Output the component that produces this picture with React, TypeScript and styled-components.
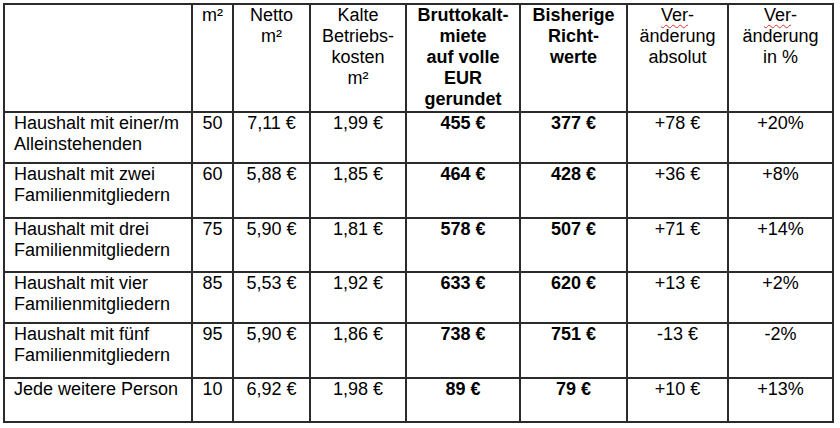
import React from 'react';
import styled, { createGlobalStyle } from 'styled-components';

const GlobalStyle = createGlobalStyle`
  html, body {
    margin: 0;
    padding: 0;
    background: #fff;
  }
  body {
    font-family: 'Liberation Sans', Arial, sans-serif;
    color: #000;
  }
`;

const Page = styled.div`
  width: 840px;
  height: 428px;
  padding: 3px 0 0 3px;
  box-sizing: border-box;
  background: #fff;
`;

const Table = styled.table`
  border-collapse: collapse;
  table-layout: fixed;
  width: 829px;
  font-size: 18px;
`;

const HeadRow = styled.tr`
  height: 108px;
`;

const Row = styled.tr<{ $h: number }>`
  height: ${(p) => p.$h}px;
`;

const HeadCell = styled.th<{ $bold?: boolean }>`
  border: 2px solid #2b2b2b;
  padding: 0 2px;
  vertical-align: top;
  text-align: center;
  font-weight: ${(p) => (p.$bold ? 700 : 400)};
  line-height: 21px;
`;

const Cell = styled.td<{ $bold?: boolean; $label?: boolean }>`
  border: 2px solid #2b2b2b;
  padding: ${(p) => (p.$label ? '0 4px 0 9px' : '0 2px')};
  vertical-align: top;
  text-align: ${(p) => (p.$label ? 'left' : 'center')};
  font-weight: ${(p) => (p.$bold ? 700 : 400)};
  line-height: 21px;
`;

const Squiggle = styled.span`
  text-decoration: underline wavy #d03030;
  text-decoration-thickness: 1px;
  text-underline-offset: 3px;
`;

const widths = [188, 41, 77, 96, 114, 107, 101, 105];

interface RowData {
  label: string;
  m2: string;
  netto: string;
  kalt: string;
  brutto: string;
  bisher: string;
  abs: string;
  pct: string;
  h: number;
}

const rows: RowData[] = [
  { label: 'Haushalt mit einer/m Alleinstehenden', m2: '50', netto: '7,11 €', kalt: '1,99 €', brutto: '455 €', bisher: '377 €', abs: '+78 €', pct: '+20%', h: 51 },
  { label: 'Haushalt mit zwei Familienmitgliedern', m2: '60', netto: '5,88 €', kalt: '1,85 €', brutto: '464 €', bisher: '428 €', abs: '+36 €', pct: '+8%', h: 55 },
  { label: 'Haushalt mit drei Familienmitgliedern', m2: '75', netto: '5,90 €', kalt: '1,81 €', brutto: '578 €', bisher: '507 €', abs: '+71 €', pct: '+14%', h: 54 },
  { label: 'Haushalt mit vier Familienmitgliedern', m2: '85', netto: '5,53 €', kalt: '1,92 €', brutto: '633 €', bisher: '620 €', abs: '+13 €', pct: '+2%', h: 51 },
  { label: 'Haushalt mit fünf Familienmitgliedern', m2: '95', netto: '5,90 €', kalt: '1,86 €', brutto: '738 €', bisher: '751 €', abs: '-13 €', pct: '-2%', h: 55 },
  { label: 'Jede weitere Person', m2: '10', netto: '6,92 €', kalt: '1,98 €', brutto: '89 €', bisher: '79 €', abs: '+10 €', pct: '+13%', h: 44 },
];

const App = () => {
  return (
    <Page>
      <GlobalStyle />
      <Table>
        <colgroup>
          {widths.map((w, i) => (
            <col key={i} style={{ width: w }} />
          ))}
        </colgroup>
        <thead>
          <HeadRow>
            <HeadCell />
            <HeadCell>m²</HeadCell>
            <HeadCell>
              Netto
              <br />
              m²
            </HeadCell>
            <HeadCell>
              Kalte
              <br />
              Betriebs-
              <br />
              kosten
              <br />
              m²
            </HeadCell>
            <HeadCell $bold>
              Bruttokalt-
              <br />
              miete
              <br />
              auf volle
              <br />
              EUR
              <br />
              gerundet
            </HeadCell>
            <HeadCell $bold>
              Bisherige
              <br />
              Richt-
              <br />
              werte
            </HeadCell>
            <HeadCell>
              <Squiggle>Ver</Squiggle>-
              <br />
              änderung
              <br />
              absolut
            </HeadCell>
            <HeadCell>
              <Squiggle>Ver</Squiggle>-
              <br />
              änderung
              <br />
              in %
            </HeadCell>
          </HeadRow>
        </thead>
        <tbody>
          {rows.map((r) => (
            <Row key={r.label} $h={r.h}>
              <Cell $label>{r.label}</Cell>
              <Cell>{r.m2}</Cell>
              <Cell>{r.netto}</Cell>
              <Cell>{r.kalt}</Cell>
              <Cell $bold>{r.brutto}</Cell>
              <Cell $bold>{r.bisher}</Cell>
              <Cell>{r.abs}</Cell>
              <Cell>{r.pct}</Cell>
            </Row>
          ))}
        </tbody>
      </Table>
    </Page>
  );
};

export default App;
